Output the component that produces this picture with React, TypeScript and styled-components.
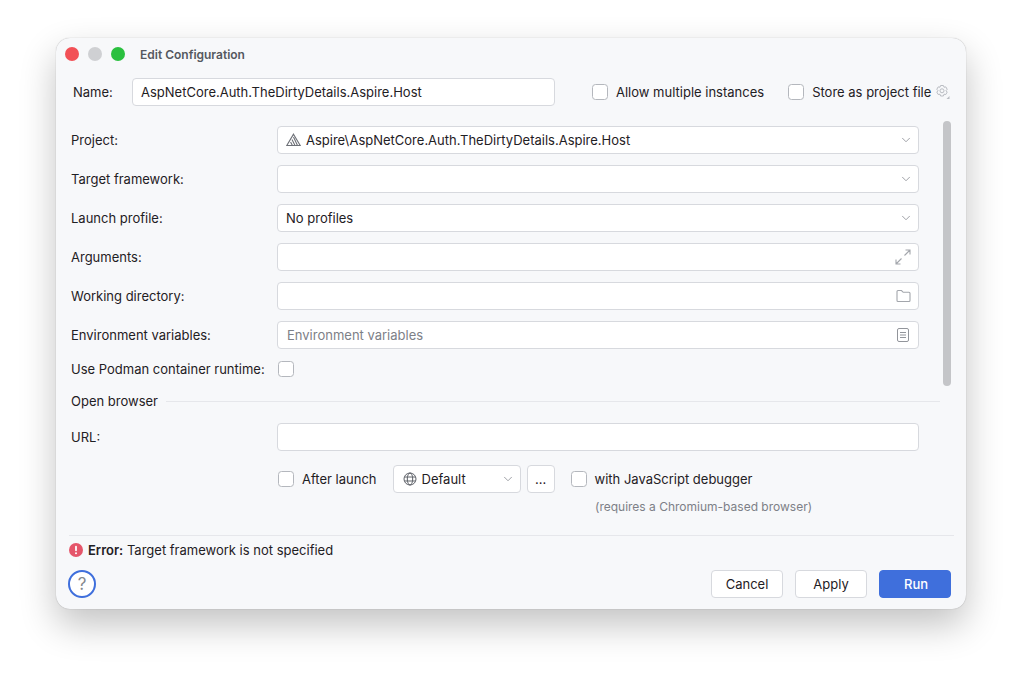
import React from 'react';
import styled, { createGlobalStyle } from 'styled-components';
import { ChevronDown } from 'lucide-react';

const GlobalStyle = createGlobalStyle`
  html, body {
    margin: 0;
    padding: 0;
    background: #ffffff;
  }
  body {
    font-family: Inter, "Liberation Sans", sans-serif;
    font-size: 13px;
    color: #1f2024;
  }
`;

const Page = styled.div`
  width: 1022px;
  height: 683px;
  padding: 38px 56px 74px;
  box-sizing: border-box;
  overflow: hidden;
`;
const Dialog = styled.div`
  display: flex;
  flex-direction: column;
  width: 910px;
  height: 571px;
  padding-bottom: 11px;
  box-sizing: border-box;
  background: #f7f8fa;
  border-radius: 14px;
  box-shadow: 0 0 1px rgba(0, 0, 0, 0.35), 0 16px 36px rgba(0, 0, 0, 0.24);
`;
const TitleBar = styled.div`
  display: flex;
  align-items: center;
  height: 32px;
  padding-left: 9px;
`;
const Light = styled.span<{ $color: string }>`
  width: 14px;
  height: 14px;
  margin-right: 9px;
  border-radius: 50%;
  background: ${(p) => p.$color};
`;
const Title = styled.span`
  margin-left: 6px;
  font-size: 12px;
  font-weight: 600;
  color: #55585f;
`;
const NameRow = styled.div`
  display: flex;
  align-items: center;
  height: 28px;
  margin-top: 8px;
  padding-left: 17px;
`;
const NameLabel = styled.label`
  width: 59px;
`;
const Field = styled.div<{ $width?: number }>`
  display: flex;
  align-items: center;
  flex: ${(p) => (p.$width ? 'none' : '1')};
  width: ${(p) => (p.$width ? `${p.$width}px` : 'auto')};
  height: 28px;
  padding: 0 7px 0 8px;
  box-sizing: border-box;
  background: #ffffff;
  border: 1px solid #d7d9de;
  border-radius: 4px;
  white-space: nowrap;
`;
const FieldText = styled.span`
  flex: 1;
`;
const Placeholder = styled.span`
  flex: 1;
  padding-left: 1px;
  color: #7d8087;
`;
const IconSlot = styled.span`
  display: flex;
  align-items: center;
  color: #8a8d94;
`;
const ChevronSlot = styled(IconSlot)`
  margin-right: -2px;
`;
const ProjectIconSlot = styled(IconSlot)`
  margin-right: 5px;
`;
const NotesSlot = styled(IconSlot)`
  margin-right: 2px;
`;
const Check = styled.span`
  flex: none;
  width: 16px;
  height: 16px;
  box-sizing: border-box;
  background: #ffffff;
  border: 1px solid #b4b7bd;
  border-radius: 3.5px;
`;
const CheckLabel = styled.label`
  display: flex;
  align-items: center;
  gap: 8px;
  white-space: nowrap;
`;
const NameOptions = styled.div`
  display: flex;
  align-items: center;
  margin-left: 37px;
`;
const SecondOption = styled(CheckLabel)`
  margin-left: 24px;
`;
const GearSlot = styled.span`
  display: flex;
  margin-left: 4px;
  color: #b9bcc2;
`;
const Body = styled.div`
  display: flex;
  flex: 1;
  margin-top: 15px;
  padding-left: 15px;
`;
const Form = styled.div`
  width: 869px;
  padding-top: 5px;
`;
const Row = styled.div`
  display: flex;
  align-items: center;
  height: 28px;
  margin-bottom: 11px;
  padding-right: 21px;
`;
const RowLabel = styled.label`
  flex: none;
  width: 206px;
  white-space: nowrap;
`;
const CheckRow = styled(Row)`
  height: 16px;
  margin: 12px 0 0;
  & > span {
    margin-left: 1px;
  }
`;
const SectionRow = styled.div`
  display: flex;
  align-items: center;
  gap: 8px;
  height: 16px;
  margin: 16px 0 14px;
`;
const SectionRule = styled.span`
  flex: 1;
  height: 1px;
  background: #e6e7eb;
`;
const UrlRow = styled(Row)`
  margin-bottom: 14px;
`;
const LaunchRow = styled(Row)`
  margin-bottom: 0;
  padding-left: 207px;
`;
const BrowserSelect = styled(Field)`
  margin-left: 16px;
  padding-left: 9px;
  gap: 5px;
`;
const DotsButton = styled(Field)`
  justify-content: center;
  margin-left: 6px;
  padding: 0;
`;
const DebuggerOption = styled(CheckLabel)`
  margin-left: 16px;
`;
const Note = styled.div`
  margin-top: 6px;
  padding-left: 524px;
  font-size: 12px;
  color: #7d8087;
`;
const ScrollTrack = styled.div`
  flex: none;
  width: 8px;
  margin-left: 3px;
`;
const ScrollThumb = styled.div`
  width: 8px;
  height: 265px;
  background: #c4c5c8;
  border-radius: 4px;
`;
const Divider = styled.div`
  height: 1px;
  margin: 0 12px 0 13px;
  background: #e6e7eb;
`;
const ErrorRow = styled.div`
  display: flex;
  align-items: center;
  gap: 5px;
  height: 27px;
  padding-left: 13px;
`;
const ErrorWord = styled.b`
  font-weight: 600;
`;
const Footer = styled.div`
  display: flex;
  align-items: center;
  height: 28px;
  margin-top: 7px;
  padding: 0 15px 0 12px;
`;
const HelpButton = styled.span`
  display: flex;
  align-items: center;
  justify-content: center;
  width: 28px;
  height: 28px;
  box-sizing: border-box;
  border: 2px solid #3f6fdc;
  border-radius: 50%;
  background: #ffffff;
  font-size: 17px;
  color: #85888e;
`;
const FooterSpacer = styled.span`
  flex: 1;
`;
const Button = styled.button<{ $primary?: boolean }>`
  width: 72px;
  height: 28px;
  margin-left: 12px;
  padding: 0;
  font: inherit;
  font-weight: ${(p) => (p.$primary ? 500 : 400)};
  color: ${(p) => (p.$primary ? '#ffffff' : '#1f2024')};
  background: ${(p) => (p.$primary ? '#3f6fdc' : '#ffffff')};
  border: 1px solid ${(p) => (p.$primary ? '#3f6fdc' : '#d7d9de')};
  border-radius: 4px;
`;
const RunLabel = styled.span`
  padding-left: 2px;
`;

const Chevron = () => (
  <ChevronSlot>
    <ChevronDown size={14} strokeWidth={1.4} />
  </ChevronSlot>
);

const AspireIcon = () => (
  <svg width="15" height="14" viewBox="0 0 15 14" fill="none" stroke="#6d7077" strokeWidth="1.1">
    <path d="M7.5 1.2 14.2 12.5H0.8Z" />
    <path d="M7.5 4 11.5 12.5M6 6.5 9 12.5M4.6 9 6.4 12.5" />
  </svg>
);

const ExpandIcon = () => (
  <svg width="16" height="16" viewBox="0 0 16 16" fill="none" stroke="#a3a6ac" strokeWidth="1.1">
    <path d="M9.5 6.5 15 1M10.5 1H15V5.5M6.5 9.5 1 15M1 10.5V15H5.5" />
  </svg>
);

const FolderIcon = () => (
  <svg width="15" height="14" viewBox="0 0 15 14" fill="none" stroke="#a3a6ac" strokeWidth="1.1">
    <path d="M1 2.5C1 1.9 1.4 1.5 2 1.5H5.5L7.2 3.3H13C13.6 3.3 14 3.7 14 4.3V11.5C14 12.1 13.6 12.5 13 12.5H2C1.4 12.5 1 12.1 1 11.5Z" />
  </svg>
);

const NotesIcon = () => (
  <svg width="12" height="14" viewBox="0 0 12 14" fill="none" stroke="#92959b" strokeWidth="1">
    <rect x="0.5" y="0.5" width="11" height="13" rx="1.5" />
    <path d="M3 4.5H9M3 7H9M3 9.5H9" />
  </svg>
);

const GearIcon = () => (
  <svg width="15" height="16" viewBox="0 0 15 16" fill="none" stroke="currentColor" strokeWidth="1">
    <path d="M5.6 1.5H8.4L9 3.2 10.8 2.9 12.2 5.3 11 6.7 12.2 8.1 10.8 10.5 9 10.2 8.4 12H5.6L5 10.2 3.2 10.5 1.8 8.1 3 6.7 1.8 5.3 3.2 2.9 5 3.2Z" />
    <circle cx="7" cy="6.8" r="2" />
    <path d="M14.5 12V15H11.5Z" fill="currentColor" stroke="none" />
  </svg>
);

const GlobeIcon = () => (
  <svg width="14" height="14" viewBox="0 0 14 14" fill="none" stroke="#5f6269" strokeWidth="1">
    <circle cx="7" cy="7" r="6" />
    <ellipse cx="7" cy="7" rx="2.7" ry="6" />
    <path d="M1.5 5H12.5M1.5 9H12.5" />
  </svg>
);

const ErrorIcon = () => (
  <svg width="14" height="14" viewBox="0 0 14 14">
    <circle cx="7" cy="7" r="7" fill="#e5556a" />
    <rect x="6.1" y="2.8" width="1.8" height="5.4" rx="0.9" fill="#ffffff" />
    <circle cx="7" cy="10.3" r="1" fill="#ffffff" />
  </svg>
);

const App: React.FC = () => (
  <Page>
    <GlobalStyle />
    <Dialog>
      <TitleBar>
        <Light $color="#f25056" />
        <Light $color="#cfd0d3" />
        <Light $color="#2ac03f" />
        <Title>Edit Configuration</Title>
      </TitleBar>
      <NameRow>
        <NameLabel>Name:</NameLabel>
        <Field $width={423}>
          <FieldText>AspNetCore.Auth.TheDirtyDetails.Aspire.Host</FieldText>
        </Field>
        <NameOptions>
          <CheckLabel>
            <Check />
            Allow multiple instances
          </CheckLabel>
          <SecondOption>
            <Check />
            Store as project file
          </SecondOption>
          <GearSlot>
            <GearIcon />
          </GearSlot>
        </NameOptions>
      </NameRow>
      <Body>
        <Form>
          <Row>
            <RowLabel>Project:</RowLabel>
            <Field>
              <ProjectIconSlot>
                <AspireIcon />
              </ProjectIconSlot>
              <FieldText>Aspire\AspNetCore.Auth.TheDirtyDetails.Aspire.Host</FieldText>
              <Chevron />
            </Field>
          </Row>
          <Row>
            <RowLabel>Target framework:</RowLabel>
            <Field>
              <FieldText />
              <Chevron />
            </Field>
          </Row>
          <Row>
            <RowLabel>Launch profile:</RowLabel>
            <Field>
              <FieldText>No profiles</FieldText>
              <Chevron />
            </Field>
          </Row>
          <Row>
            <RowLabel>Arguments:</RowLabel>
            <Field>
              <FieldText />
              <ExpandIcon />
            </Field>
          </Row>
          <Row>
            <RowLabel>Working directory:</RowLabel>
            <Field>
              <FieldText />
              <FolderIcon />
            </Field>
          </Row>
          <Row>
            <RowLabel>Environment variables:</RowLabel>
            <Field>
              <Placeholder>Environment variables</Placeholder>
              <NotesSlot>
                <NotesIcon />
              </NotesSlot>
            </Field>
          </Row>
          <CheckRow>
            <RowLabel>Use Podman container runtime:</RowLabel>
            <Check />
          </CheckRow>
          <SectionRow>
            Open browser
            <SectionRule />
          </SectionRow>
          <UrlRow>
            <RowLabel>URL:</RowLabel>
            <Field />
          </UrlRow>
          <LaunchRow>
            <CheckLabel>
              <Check />
              After launch
            </CheckLabel>
            <BrowserSelect $width={128}>
              <GlobeIcon />
              <FieldText>Default</FieldText>
              <Chevron />
            </BrowserSelect>
            <DotsButton $width={28}>...</DotsButton>
            <DebuggerOption>
              <Check />
              with JavaScript debugger
            </DebuggerOption>
          </LaunchRow>
          <Note>(requires a Chromium-based browser)</Note>
        </Form>
        <ScrollTrack>
          <ScrollThumb />
        </ScrollTrack>
      </Body>
      <Divider />
      <ErrorRow>
        <ErrorIcon />
        <span>
          <ErrorWord>Error:</ErrorWord> Target framework is not specified
        </span>
      </ErrorRow>
      <Footer>
        <HelpButton>?</HelpButton>
        <FooterSpacer />
        <Button>Cancel</Button>
        <Button>Apply</Button>
        <Button $primary>
          <RunLabel>Run</RunLabel>
        </Button>
      </Footer>
    </Dialog>
  </Page>
);

export default App;
